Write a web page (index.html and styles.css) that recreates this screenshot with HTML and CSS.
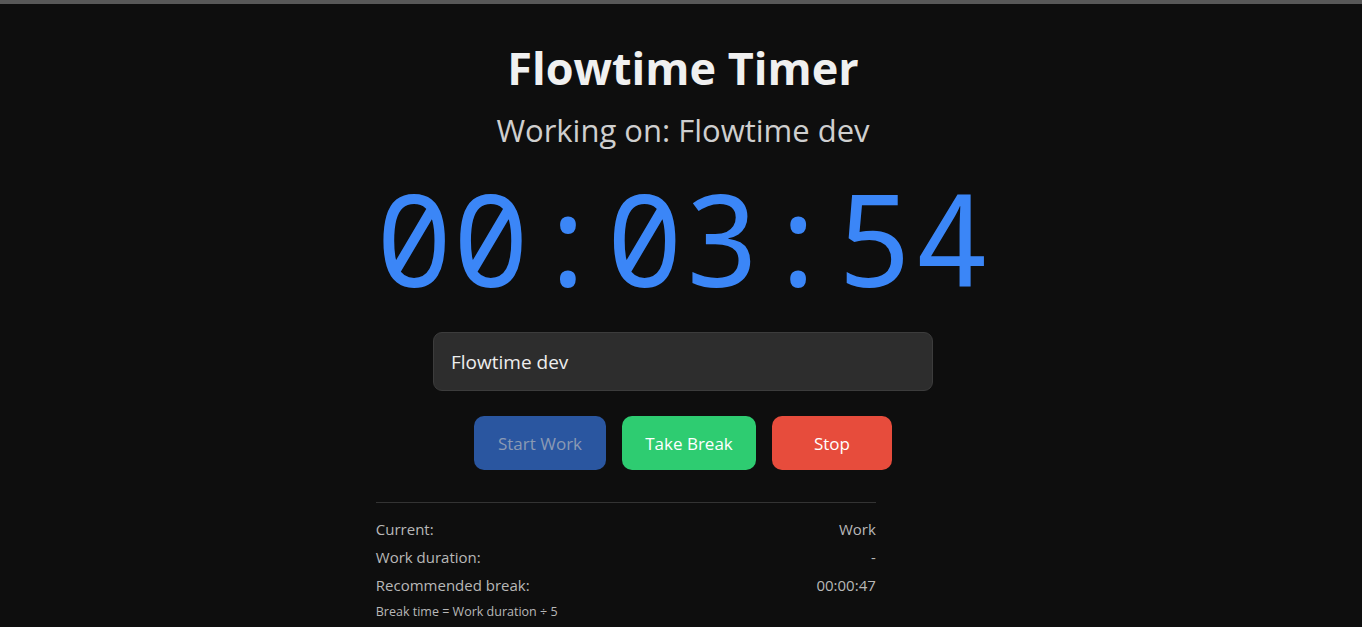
FILE: index.html
```html
<!DOCTYPE html>
<html lang="en">
<head>
<meta charset="utf-8">
<title>Flowtime Timer</title>
<link rel="stylesheet" href="styles.css">
</head>
<body>
<main class="app">
  <h1 class="title">Flowtime Timer</h1>
  <p class="task">Working on: Flowtime dev</p>
  <div class="clock">00:03:54</div>
  <input class="task-input" type="text" value="Flowtime dev">
  <div class="buttons">
    <button class="btn btn-start" disabled>Start Work</button>
    <button class="btn btn-break">Take Break</button>
    <button class="btn btn-stop">Stop</button>
  </div>
  <section class="stats">
    <div class="row"><span>Current:</span><span>Work</span></div>
    <div class="row"><span>Work duration:</span><span>-</span></div>
    <div class="row"><span>Recommended break:</span><span>00:00:47</span></div>
    <div class="note">Break time = Work duration ÷ 5</div>
  </section>
</main>
</body>
</html>
```

FILE: styles.css
```css
html, body {
  margin: 0;
  padding: 0;
  height: 100%;
  overflow: hidden;
}
body {
  background: #0e0e0e;
  border-top: 4px solid #585858;
  color: #e0e0e0;
  font-family: "Open Sans", "Noto Sans", sans-serif;
}
.app {
  display: flex;
  flex-direction: column;
  align-items: center;
  width: fit-content;
  margin: 0 auto;
  padding: 36px 0 0 4px;
}
.title {
  margin: 0;
  font-size: 45px;
  font-weight: 700;
  line-height: 56px;
  color: #f0f0f0;
}
.task {
  margin: 14px 0 0;
  font-size: 31px;
  line-height: 40px;
  color: #cfcfcf;
}
.clock {
  margin-top: 13px;
  font-family: "Noto Sans Mono", "Liberation Mono", monospace;
  font-size: 128px;
  line-height: 150px;
  color: #3b86f7;
}
.task-input {
  margin-top: 19px;
  box-sizing: border-box;
  width: 500px;
  height: 59px;
  padding: 0 17px;
  background: #2d2d2d;
  border: 1px solid #3c3c3c;
  border-radius: 9px;
  color: #eeeeee;
  font-family: inherit;
  font-size: 19px;
  outline: none;
}
.buttons {
  display: flex;
  gap: 16px;
  margin-top: 25px;
}
.btn {
  height: 54px;
  padding: 0;
  border: none;
  border-radius: 10px;
  font-family: inherit;
  font-size: 17px;
  color: #ffffff;
}
.btn-start {
  width: 132px;
  background: #2a56a0;
  color: #8a9ab4;
}
.btn-break {
  width: 134px;
  background: #2ecc71;
}
.btn-stop {
  width: 120px;
  background: #e74c3c;
}
.stats {
  align-self: flex-start;
  margin-top: 32px;
  width: 500px;
  border-top: 1px solid #333333;
  padding-top: 12px;
  color: #b8b8b8;
  font-size: 15px;
}
.row {
  display: flex;
  justify-content: space-between;
  line-height: 28px;
}
.note {
  margin-top: 1px;
  font-size: 12.5px;
  line-height: 24px;
}
```
